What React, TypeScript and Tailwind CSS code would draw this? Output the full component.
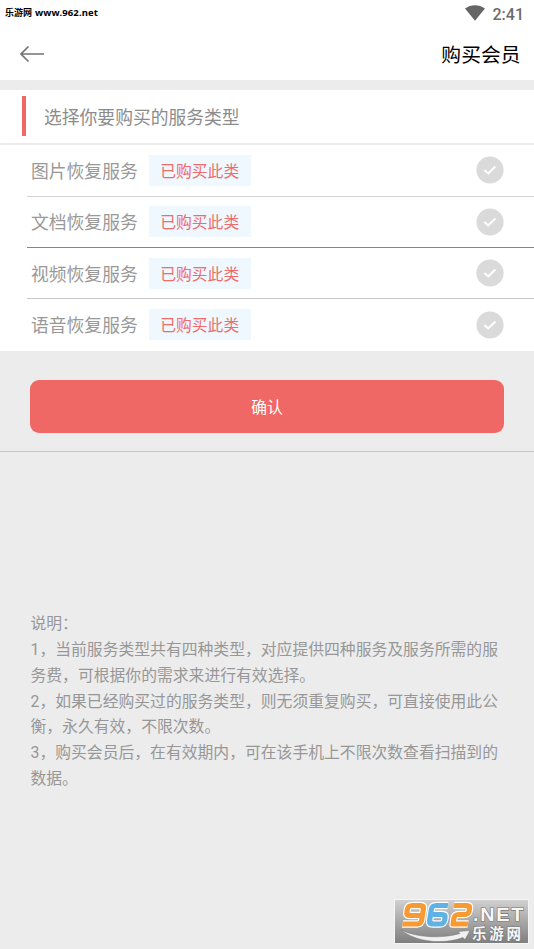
import React from "react";

const services = [
  { name: "图片恢复服务", line: "border-[#d3d3d3]", height: "h-[51.5px]" },
  { name: "文档恢复服务", line: "border-[#868686]", height: "h-[51.5px]" },
  { name: "视频恢复服务", line: "border-[#c6c6c6]", height: "h-[51px]" },
  { name: "语音恢复服务", line: "border-transparent", height: "h-[52px]" },
];

const notes = [
  "说明：",
  "1，当前服务类型共有四种类型，对应提供四种服务及服务所需的服",
  "务费，可根据你的需求来进行有效选择。",
  "2，如果已经购买过的服务类型，则无须重复购买，可直接使用此公",
  "衡，永久有效，不限次数。",
  "3，购买会员后，在有效期内，可在该手机上不限次数查看扫描到的",
  "数据。",
];

function StatusBar() {
  return (
    <div className="flex h-7 items-start justify-between pl-[5px] pr-[10px]">
      <div className="mt-[6px] flex items-center gap-[3px] whitespace-nowrap text-[9px] font-bold leading-[14px] text-black">
        <span>乐游网</span>
        <span className="font-['Noto_Sans','Noto_Sans_CJK_SC',sans-serif] text-[9.5px] tracking-[0.13px]">www.962.net</span>
      </div>
      <div className="flex items-start">
        <svg className="mt-[5px] h-[16px] w-[20px]" viewBox="0 0 20 16" fill="#666">
          <path d="M0 3.6C5.8-.9 14.2-.9 20 3.6L10 15.8Z" />
        </svg>
        <span className="ml-2 mt-[5px] text-[16px] font-medium leading-5 text-[#6b6b6b]">2:41</span>
      </div>
    </div>
  );
}

function CheckMark() {
  return (
    <svg className="h-[28px] w-[28px]" viewBox="0 0 28 28">
      <circle cx="14" cy="14" r="13.6" fill="#dadada" />
      <path d="M8.3 14L12.2 17.4L19.4 10.6" fill="none" stroke="#fff" strokeWidth="2" />
    </svg>
  );
}

function SiteLogo() {
  return (
    <svg className="absolute bottom-[5px] right-[5px] h-[45px] w-[135px]" viewBox="0 0 135 45">
      <defs>
        <linearGradient id="plate" x1="0" y1="0" x2="0" y2="1">
          <stop offset="0" stopColor="#d0d0d0" />
          <stop offset="1" stopColor="#7f7f7f" />
        </linearGradient>
      </defs>
      <rect width="135" height="45" fill="#f5f5f5" />
      <rect x="1" y="1" width="133" height="43" fill="url(#plate)" />
      <g fill="none" strokeLinejoin="round" transform="translate(2 0) skewX(-9)">
        <g stroke="#fff" strokeWidth="7.4">
          <path d="M10.500 25H25Q29 25 29 21V10Q29 6.500 25 6.500H17Q13 6.500 13 10V13Q13 16.500 17 16.500H29" />
          <path d="M53 6.500H41Q37 6.500 37 10V21Q37 25 41 25H48Q52 25 52 21V19Q52 15.500 48 15.500H37" />
          <path d="M59 6.500H71Q75 6.500 75 10V12Q75 15.500 71 15.500H65Q61 15.500 61 19V25H76" />
        </g>
        <g strokeWidth="5.2">
          <path stroke="#f79a32" d="M10.500 25H25Q29 25 29 21V10Q29 6.500 25 6.500H17Q13 6.500 13 10V13Q13 16.500 17 16.500H29" />
          <path stroke="#60b2e4" d="M53 6.500H41Q37 6.500 37 10V21Q37 25 41 25H48Q52 25 52 21V19Q52 15.500 48 15.500H37" />
          <path stroke="#f79a32" d="M59 6.500H71Q75 6.500 75 10V12Q75 15.500 71 15.500H65Q61 15.500 61 19V25H76" />
        </g>
      </g>
      <path d="M7 31C22 38.500 48 40 66 34.500L64 32.500L76 31.500L71 40.500L69 38.500C49 46 22 43 7 31Z" fill="#f1f1f1" stroke="#777" strokeWidth=".5" />
      <g fill="#f6f6f6" stroke="#777" strokeWidth="1.2" paintOrder="stroke" fontWeight="700">
        <text x="79" y="21.500" fontSize="17.5" textLength="52" lengthAdjust="spacingAndGlyphs" letterSpacing="1.5" fontFamily="Liberation Sans, sans-serif">.NET</text>
        <text x="78" y="39.500" fontSize="14.5" letterSpacing="2.7" fontFamily="Noto Sans CJK SC, sans-serif">乐游网</text>
      </g>
    </svg>
  );
}

export default function App() {
  return (
    <div className="relative flex h-[949px] w-[534px] flex-col overflow-hidden bg-[#ececec] font-[Roboto,'Noto_Sans_CJK_SC',sans-serif]">
      <header className="h-20 shrink-0 bg-white">
        <StatusBar />
        <div className="flex h-[52px] items-center justify-between pl-5 pr-[13.5px]">
          <svg className="h-4 w-6" viewBox="0 0 24 16" fill="none" stroke="#737373" strokeWidth="1.6">
            <path d="M24 8H1M8.500 0.500L1 8L8.500 15.500" />
          </svg>
          <h1 className="pt-[3px] text-[19.8px] leading-7 text-black">购买会员</h1>
        </div>
      </header>

      <section className="mt-[9.5px] shrink-0 bg-white">
        <div className="flex h-[55.5px] items-center border-b-2 border-[#ebebeb] pl-[22px]">
          <div className="h-10 w-1 bg-[#f06865]" />
          <h2 className="ml-[18px] pt-[3px] text-[17.8px] leading-6 text-[#8c8c8c]">选择你要购买的服务类型</h2>
        </div>
        {services.map((service) => (
          <div
            key={service.name}
            className={`ml-[27px] flex items-center border-b pl-1 pr-[30px] ${service.height} ${service.line}`}
          >
            <span className="pt-[3px] text-[17.8px] leading-6 text-[#999]">{service.name}</span>
            <span className="ml-[11px] flex h-[31px] w-[102px] items-center justify-center bg-[#eff7ff] pt-[3px] text-[15.8px] text-[#ee6d6b]">
              已购买此类
            </span>
            <span className="ml-auto">
              <CheckMark />
            </span>
          </div>
        ))}
      </section>

      <div className="flex h-[101px] shrink-0 items-start border-b border-[#c6c6c6] px-[30px] pt-[28.5px]">
        <button className="h-[53.5px] w-full rounded-[9px] bg-[#f06865] pt-[3px] text-[15.8px] text-white">确认</button>
      </div>

      <div className="mt-[159.25px] pl-[30.5px] text-[15.82px] leading-[25.75px] text-[#979797]">
        {notes.map((line) => (
          <p key={line} className="whitespace-nowrap">{line}</p>
        ))}
      </div>
      <SiteLogo />
    </div>
  );
}
